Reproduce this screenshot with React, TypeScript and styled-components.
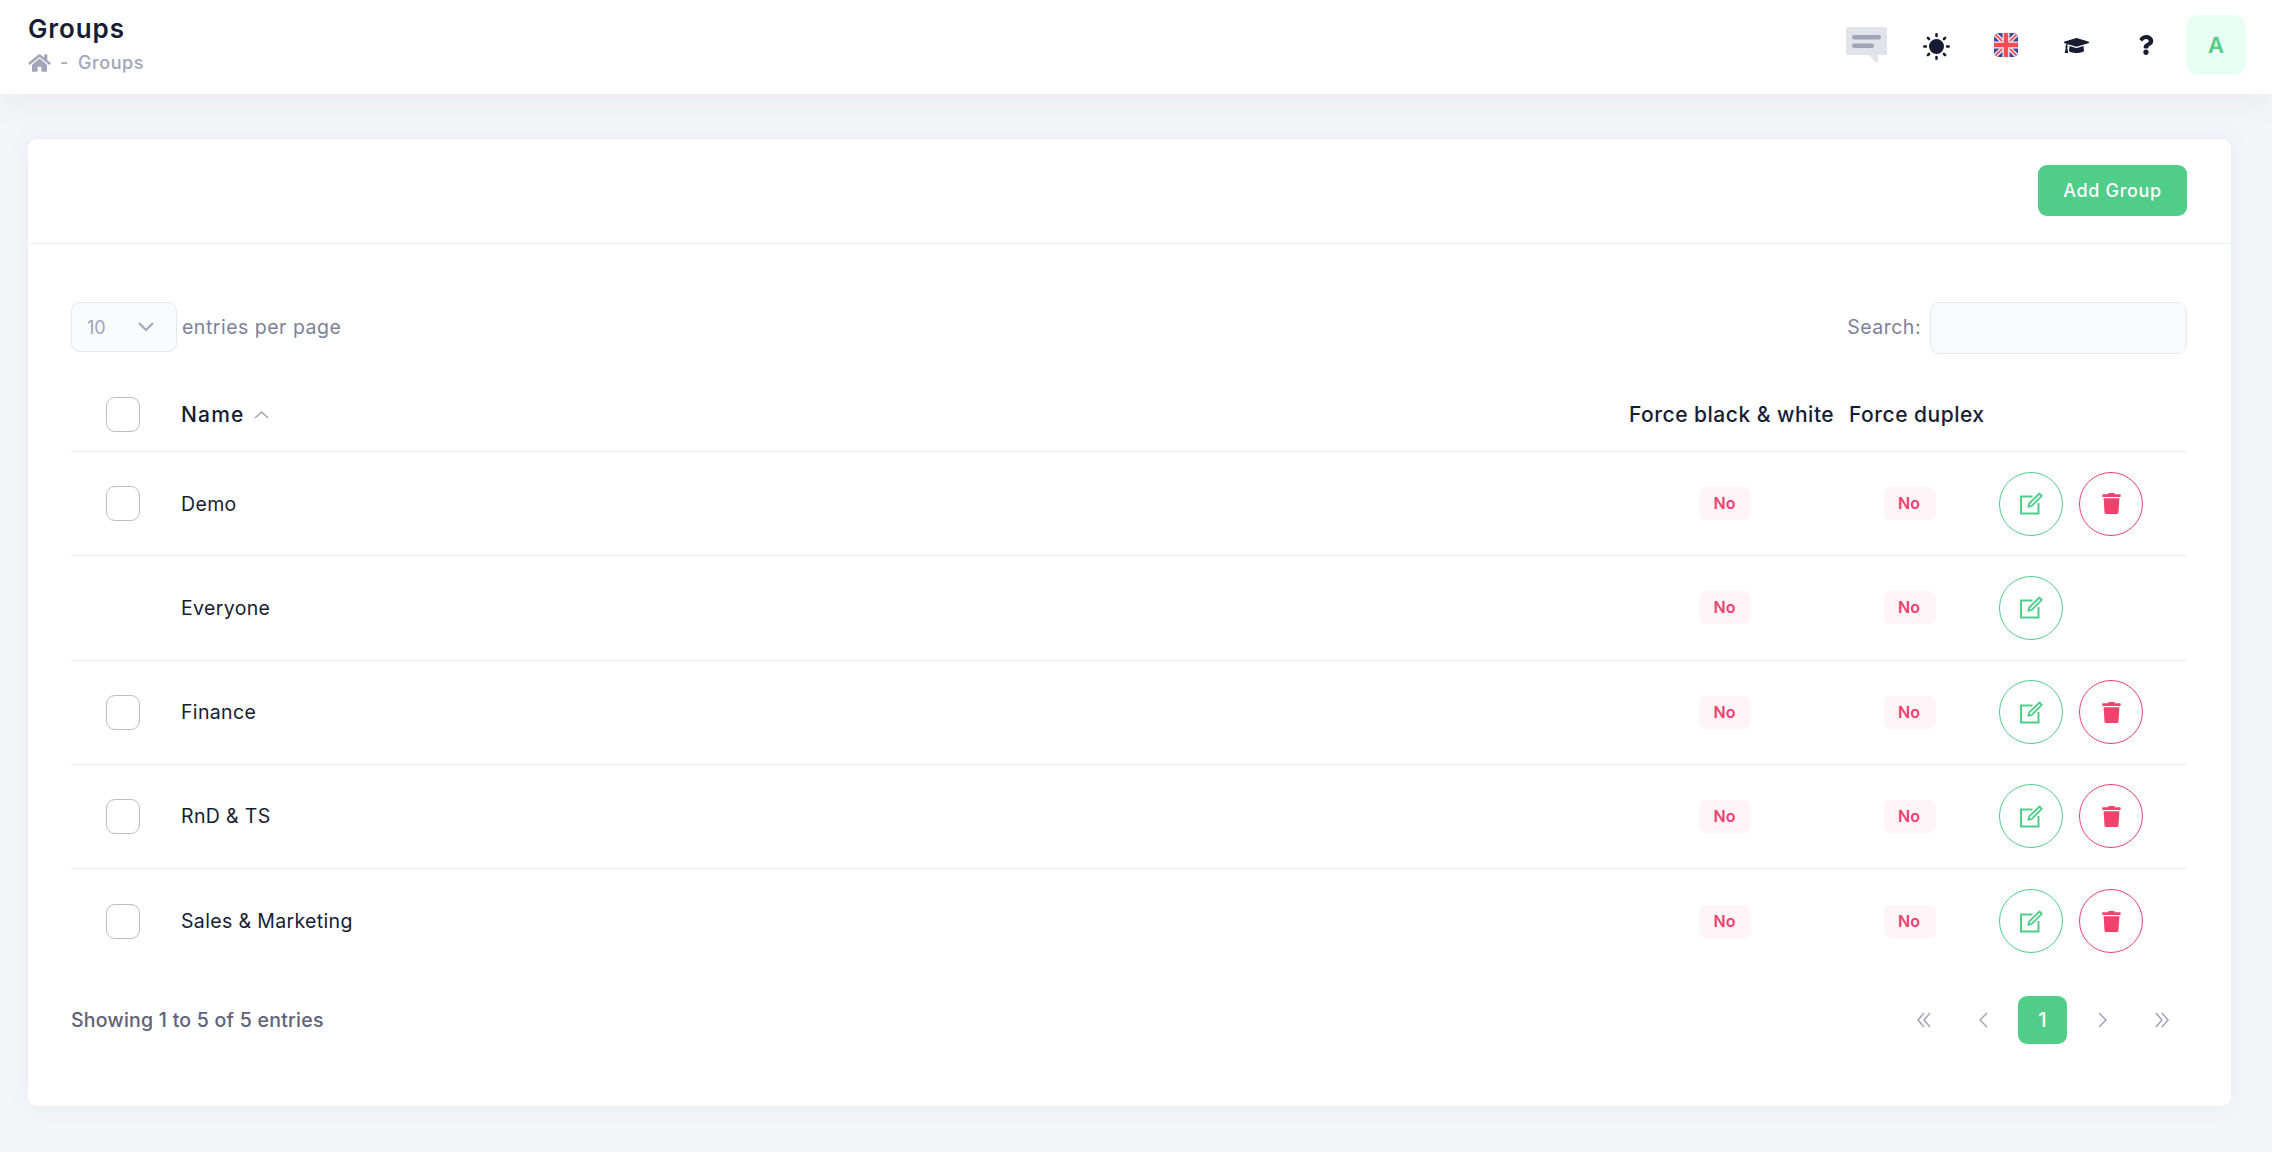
import React from 'react';
import styled, { createGlobalStyle } from 'styled-components';
import { FaGraduationCap, FaHome, FaQuestion, FaTrash } from 'react-icons/fa';

const GlobalStyle = createGlobalStyle`
  html, body {
    margin: 0;
    background: #f3f6f9;
    font-family: Inter, "Open Sans", "Liberation Sans", sans-serif;
    color: #181c32;
  }
  * { box-sizing: border-box; }
`;

const Page = styled.div`
  height: 1152px;
  overflow: hidden;
`;

const Header = styled.header`
  height: 94px;
  padding: 15px 26px 19px 28px;
  background: #fff;
  display: flex;
  align-items: center;
  justify-content: space-between;
  box-shadow: 0 10px 30px rgba(82, 63, 105, 0.06);
`;

const TitleBlock = styled.div`
  display: flex;
  flex-direction: column;
  gap: 9px;
  margin-top: -1px;
`;

const Title = styled.h1`
  margin: 0;
  font-size: 26px;
  line-height: 28px;
  font-weight: 600;
  letter-spacing: 0.9px;
`;

const Crumbs = styled.div`
  display: flex;
  align-items: center;
  gap: 9px;
  color: #a1a5b7;
  font-size: 18px;
  line-height: 22px;
  font-weight: 500;
  letter-spacing: 0.6px;
  svg {
    width: 23px;
    height: 20px;
  }
`;

const Tools = styled.div`
  display: flex;
  align-items: center;
  gap: 10px;
`;

const ToolButton = styled.div`
  width: 60px;
  height: 60px;
  display: flex;
  align-items: center;
  justify-content: center;
  color: #181c32;
`;

const Avatar = styled(ToolButton)`
  background: #e8fff3;
  border-radius: 12px;
  color: #50cd89;
  font-size: 22px;
  font-weight: 600;
`;

const Card = styled.main`
  margin: 45px 41px 0 28px;
  height: 967px;
  background: #fff;
  border-radius: 9px;
  box-shadow: 0 0 20px rgba(76, 87, 125, 0.08);
`;

const CardHead = styled.div`
  height: 105px;
  padding: 0 44px 0 43px;
  display: flex;
  align-items: center;
  justify-content: flex-end;
  border-bottom: 1px solid #eff2f5;
`;

const AddButton = styled.button`
  width: 149px;
  height: 51px;
  margin-top: -1px;
  border: 0;
  border-radius: 9px;
  background: #50cd89;
  color: #fff;
  font: 500 18px Inter, sans-serif;
  letter-spacing: 0.65px;
`;

const CardBody = styled.div`
  padding: 57px 44px 0 43px;
`;

const Controls = styled.div`
  display: flex;
  align-items: center;
  justify-content: space-between;
  margin-bottom: 25px;
`;

const ControlGroup = styled.label`
  display: flex;
  align-items: center;
  gap: 5px;
  color: #7e8299;
  font-size: 19.5px;
  letter-spacing: 0.5px;
`;

const PageSize = styled.div`
  width: 106px;
  height: 50px;
  padding: 0 15px;
  display: flex;
  align-items: center;
  gap: 32px;
  background: #f9fafc;
  border: 1px solid #e4e9f0;
  border-radius: 9px;
  color: #a1a5b7;
  font-size: 18px;
  letter-spacing: 0;
`;

const SearchInput = styled.input`
  width: 257px;
  height: 52px;
  margin: 1px 0 -1px 4px;
  background: #f9fafc;
  border: 1px solid #e4e9f0;
  border-radius: 9px;
`;

const Table = styled.table`
  width: 100%;
  table-layout: fixed;
  border-collapse: separate;
  border-spacing: 0;
`;

const Th = styled.th`
  height: 74px;
  padding: 0 0 0 10px;
  text-align: left;
  font-size: 21px;
  font-weight: 500;
  letter-spacing: 0.5px;
  border-bottom: 1px solid #eff2f5;
  white-space: nowrap;
  &:first-child, &:nth-child(2) {
    padding-left: 0;
  }
`;

const Tr = styled.tr`
  &:last-child td {
    border-bottom: 0;
  }
`;

const Td = styled.td`
  height: 104.25px;
  padding: 0;
  font-size: 19.5px;
  letter-spacing: 0.35px;
  border-bottom: 1px solid #eff2f5;
`;

const FlagCell = styled(Td)<{ $right: number }>`
  text-align: center;
  padding-right: ${(p) => p.$right}px;
`;

const ActionCell = styled(Td)`
  padding-left: 10px;
`;

const Checkbox = styled.span`
  display: block;
  width: 34px;
  height: 35px;
  margin-left: 35px;
  border: 1px solid #bdbdbd;
  border-radius: 9px;
  background: #fff;
`;

const SortName = styled.span`
  display: inline-flex;
  align-items: center;
  gap: 9px;
  letter-spacing: 1.2px;
`;

const Badge = styled.span`
  display: inline-block;
  width: 52px;
  height: 33px;
  line-height: 33px;
  border-radius: 7px;
  background: #fff5f8;
  color: #f1416c;
  font-size: 16px;
  font-weight: 600;
  letter-spacing: 0;
  text-align: center;
  padding-right: 1px;
`;

const Actions = styled.div`
  display: flex;
  gap: 16px;
`;

const CircleButton = styled.div<{ $color: string }>`
  width: 64px;
  height: 64px;
  border-radius: 50%;
  border: 1px solid ${(p) => p.$color};
  color: ${(p) => p.$color};
  display: flex;
  align-items: center;
  justify-content: center;
`;

const Footer = styled.div`
  display: flex;
  align-items: center;
  justify-content: space-between;
  margin-top: 23px;
  padding-right: 1px;
`;

const Info = styled.div`
  color: #5e6278;
  font-size: 19.5px;
  font-weight: 500;
  letter-spacing: 0.25px;
`;

const Pagination = styled.div`
  display: flex;
  gap: 10.5px;
`;

const PageButton = styled.div<{ $active?: boolean }>`
  width: 49px;
  height: 48px;
  border-radius: 9px;
  display: flex;
  align-items: center;
  justify-content: center;
  background: ${(p) => (p.$active ? '#50cd89' : 'transparent')};
  color: ${(p) => (p.$active ? '#fff' : '#a1a5b7')};
  font-size: 20px;
  font-weight: 500;
`;

const Chevron = ({ d, w, h, sw = 1.5 }: { d: string; w: number; h: number; sw?: number }) => (
  <svg width={w} height={h} viewBox={`0 0 ${w} ${h}`} fill="none" stroke="#a1a5b7" strokeWidth={sw}>
    <path d={d} />
  </svg>
);

const CommentIcon = () => (
  <svg width="41" height="36" viewBox="0 0 41 36">
    <path d="M2 0h37a2 2 0 0 1 2 2v24a2 2 0 0 1-2 2h-7v7a1 1 0 0 1-1.700 .7L23 28H2a2 2 0 0 1-2-2V2a2 2 0 0 1 2-2z" fill="#e1e3ea" />
    <rect x="6" y="8" width="29" height="4.500" rx="2.200" fill="#a1a5b7" />
    <rect x="6" y="16.500" width="22" height="4.500" rx="2.200" fill="#a1a5b7" />
  </svg>
);

const SunIcon = () => (
  <svg width="27" height="27" viewBox="0 -1 27 27" fill="#181c32" stroke="#181c32" overflow="visible">
    <circle cx="13.500" cy="13.500" r="7.500" stroke="none" />
    <g strokeWidth="2.600" strokeLinecap="round">
      <path d="M13.500 1.300v1.600M13.500 24.100v1.600M1.300 13.500h1.600M24.100 13.500h1.600M4.900 4.900l1.100 1.100M21 21l1.100 1.100M4.900 22.100L6 21M21 6l1.100-1.100" />
    </g>
  </svg>
);

const FlagIcon = () => (
  <svg width="24" height="24" viewBox="0 0 24 24">
    <defs>
      <clipPath id="flag-clip">
        <rect width="24" height="24" rx="5" />
      </clipPath>
    </defs>
    <g clipPath="url(#flag-clip)">
      <rect width="24" height="24" fill="#41479b" />
      <path d="M0 0L24 24M24 0L0 24" stroke="#f5f5f5" strokeWidth="4.400" />
      <path d="M0 0L24 24M24 0L0 24" stroke="#ff4b55" strokeWidth="1.800" />
      <path d="M12 0v24M0 12h24" stroke="#f5f5f5" strokeWidth="7" />
      <path d="M12 0v24M0 12h24" stroke="#ff4b55" strokeWidth="4.500" />
    </g>
  </svg>
);

const EditIcon = () => (
  <svg width="23" height="23" viewBox="0 0 23 23" fill="none" stroke="currentColor">
    <path d="M12.500 4.500H1v17h17.500V11" strokeWidth="2" />
    <path d="M19.500 1.500l2.300 2.300-10 10-3.500 1 1-3.500z" strokeWidth="1.800" strokeLinejoin="round" />
  </svg>
);

const groups = [
  { name: 'Demo', removable: true },
  { name: 'Everyone', removable: false },
  { name: 'Finance', removable: true },
  { name: 'RnD & TS', removable: true },
  { name: 'Sales & Marketing', removable: true },
];

export default function App() {
  return (
    <Page>
      <GlobalStyle />
      <Header>
        <TitleBlock>
          <Title>Groups</Title>
          <Crumbs>
            <FaHome />
            <span>-</span>
            <span>Groups</span>
          </Crumbs>
        </TitleBlock>
        <Tools>
          <ToolButton>
            <CommentIcon />
          </ToolButton>
          <ToolButton>
            <SunIcon />
          </ToolButton>
          <ToolButton>
            <FlagIcon />
          </ToolButton>
          <ToolButton>
            <FaGraduationCap size={25} />
          </ToolButton>
          <ToolButton>
            <FaQuestion size={20} />
          </ToolButton>
          <Avatar>A</Avatar>
        </Tools>
      </Header>
      <Card>
        <CardHead>
          <AddButton>Add Group</AddButton>
        </CardHead>
        <CardBody>
          <Controls>
            <ControlGroup>
              <PageSize>
                10
                <Chevron w={16} h={10} sw={2} d="M1 1l7 7 7-7" />
              </PageSize>
              entries per page
            </ControlGroup>
            <ControlGroup>
              Search:
              <SearchInput />
            </ControlGroup>
          </Controls>
          <Table>
            <colgroup>
              <col style={{ width: 110 }} />
              <col />
              <col style={{ width: 220 }} />
              <col style={{ width: 150 }} />
              <col style={{ width: 198 }} />
            </colgroup>
            <thead>
              <tr>
                <Th>
                  <Checkbox />
                </Th>
                <Th>
                  <SortName>
                    Name
                    <Chevron w={15} h={8} d="M1 7l6.500-6 6.500 6" />
                  </SortName>
                </Th>
                <Th>Force black &amp; white</Th>
                <Th>Force duplex</Th>
                <Th />
              </tr>
            </thead>
            <tbody>
              {groups.map((group) => (
                <Tr key={group.name}>
                  <Td>{group.removable && <Checkbox />}</Td>
                  <Td>{group.name}</Td>
                  <FlagCell $right={8}>
                    <Badge>No</Badge>
                  </FlagCell>
                  <FlagCell $right={9}>
                    <Badge>No</Badge>
                  </FlagCell>
                  <ActionCell>
                    <Actions>
                      <CircleButton $color="#50cd89">
                        <EditIcon />
                      </CircleButton>
                      {group.removable && (
                        <CircleButton $color="#f1416c">
                          <FaTrash size={21} />
                        </CircleButton>
                      )}
                    </Actions>
                  </ActionCell>
                </Tr>
              ))}
            </tbody>
          </Table>
          <Footer>
            <Info>Showing 1 to 5 of 5 entries</Info>
            <Pagination>
              <PageButton>
                <Chevron w={14} h={16} d="M7 1L1 8l6 7M13 1L7 8l6 7" />
              </PageButton>
              <PageButton>
                <Chevron w={9} h={16} d="M8 1L1 8l7 7" />
              </PageButton>
              <PageButton $active>1</PageButton>
              <PageButton>
                <Chevron w={9} h={16} d="M1 1l7 7-7 7" />
              </PageButton>
              <PageButton>
                <Chevron w={14} h={16} d="M1 1l6 7-6 7M7 1l6 7-6 7" />
              </PageButton>
            </Pagination>
          </Footer>
        </CardBody>
      </Card>
    </Page>
  );
}
